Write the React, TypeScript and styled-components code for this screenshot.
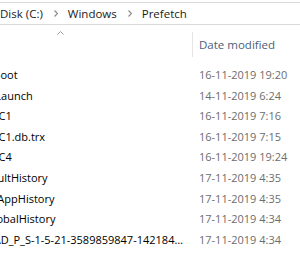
import React from "react";
import styled, { createGlobalStyle } from "styled-components";

const GlobalStyle = createGlobalStyle`
  html, body {
    margin: 0;
    padding: 0;
    background: #ffffff;
  }
  body {
    font-family: "Open Sans", "Noto Sans", sans-serif;
    font-size: 11px;
    color: #000;
  }
`;

const Window = styled.div`
  width: 300px;
  height: 256px;
  overflow: hidden;
  background: #fff;
`;

const AddressBar = styled.div`
  margin-top: 2px;
  height: 21px;
  border-top: 1px solid #dadada;
  border-bottom: 1px solid #dadada;
  display: flex;
  align-items: center;
  white-space: nowrap;
  font-size: 11.5px;
`;

const Crumb = styled.span`
  color: #1a1a1a;
  line-height: 21px;
`;

const Sep = styled.svg`
  width: 4px;
  height: 7px;
  margin: 0 10px 0 11px;
  fill: none;
  stroke: #8a8a8a;
  stroke-width: 1.2px;
`;

// name column starts off-screen, the window is scrolled to the right
const Columns = styled.div`
  display: grid;
  grid-template-columns: 230px 1fr;
  margin-left: -38px;
`;

const HeaderCell = styled.div<{ divider?: boolean }>`
  position: relative;
  height: 25px;
  margin-top: 7px;
  display: flex;
  align-items: center;
  padding-left: 6px;
  color: #4c607a;
  font-size: 11.5px;
  border-left: ${(p) => (p.divider ? "1px solid #e5e5e5" : "none")};
  white-space: nowrap;
`;

const SortArrow = styled.svg`
  position: absolute;
  top: -1px;
  left: 95px;
  width: 7px;
  height: 4px;
  fill: none;
  stroke: #9a9a9a;
  stroke-width: 1px;
`;

const Rows = styled.div`
  margin-top: 8px;
`;

const NameCell = styled.div`
  height: 20.6px;
  line-height: 20.6px;
  padding-right: 9px;
  overflow: hidden;
  text-overflow: ellipsis;
  white-space: nowrap;
  color: #000;
`;

const DateCell = styled.div`
  height: 20.6px;
  line-height: 20.6px;
  padding-left: 7px;
  color: #6d6d6d;
  white-space: nowrap;
`;

const files: [string, string][] = [
  ["ReadyBoot", "16-11-2019 19:20"],
  ["AgAppLaunch", "14-11-2019 6:24"],
  ["AgCx_SC1", "16-11-2019 7:16"],
  ["AgCx_SC1.db.trx", "16-11-2019 7:15"],
  ["AgCx_SC4", "16-11-2019 19:24"],
  ["AgGlFaultHistory", "17-11-2019 4:35"],
  ["AgGlFgAppHistory", "17-11-2019 4:35"],
  ["AgGlGlobalHistory", "17-11-2019 4:34"],
  ["AgGlUAD_P_S-1-5-21-3589859847-1421847351-2837459821", "17-11-2019 4:34"],
];

const Chevron = () => (
  <Sep viewBox="0 0 4 7">
    <polyline points="0.5 0.5 3.5 3.5 0.5 6.5" />
  </Sep>
);

export default function App() {
  return (
    <>
      <GlobalStyle />
      <Window>
        <AddressBar>
          <Crumb>Disk (C:)</Crumb>
          <Chevron />
          <Crumb>Windows</Crumb>
          <Chevron />
          <Crumb>Prefetch</Crumb>
        </AddressBar>
        <Columns>
          <HeaderCell>
            <SortArrow viewBox="0 0 7 4">
              <polyline points="0.5 3.5 3.5 0.5 6.5 3.5" />
            </SortArrow>
            Name
          </HeaderCell>
          <HeaderCell divider>Date modified</HeaderCell>
        </Columns>
        <Rows>
          {files.map(([name, date]) => (
            <Columns key={name}>
              <NameCell>{name}</NameCell>
              <DateCell>{date}</DateCell>
            </Columns>
          ))}
        </Rows>
      </Window>
    </>
  );
}
